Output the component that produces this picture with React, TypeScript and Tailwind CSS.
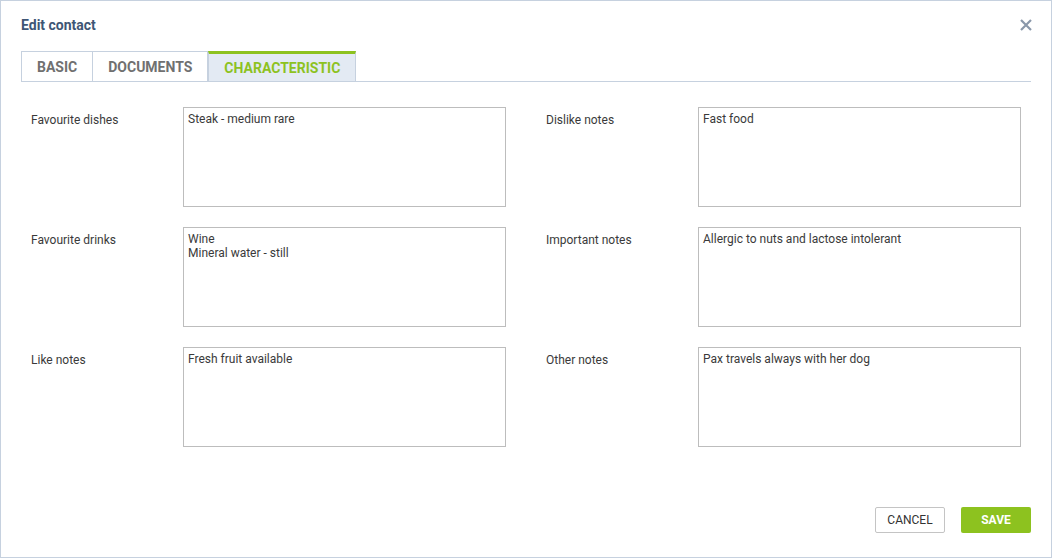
import { useState } from "react"

type Field = { label: string; value: string }

const left: Field[] = [
  { label: "Favourite dishes", value: "Steak - medium rare" },
  { label: "Favourite drinks", value: "Wine\nMineral water - still" },
  { label: "Like notes", value: "Fresh fruit available" },
]

const right: Field[] = [
  { label: "Dislike notes", value: "Fast food" },
  { label: "Important notes", value: "Allergic to nuts and lactose intolerant" },
  { label: "Other notes", value: "Pax travels always with her dog" },
]

const tabs = ["BASIC", "DOCUMENTS", "CHARACTERISTIC"]

function NoteField({ label, value }: Field) {
  return (
    <div className="flex">
      <label className="w-[152px] shrink-0 pt-[6px] text-[12px] leading-[14px] text-[#3a3a3a]">
        {label}
      </label>
      <textarea
        readOnly
        defaultValue={value}
        className="h-[100px] w-[323px] resize-none border border-[#bdbdbd] px-[4px] pt-[4px] text-[12px] leading-[14px] text-[#3a3a3a] outline-none"
        style={{ fontFamily: "inherit" }}
      />
    </div>
  )
}

export default function App() {
  const [active, setActive] = useState("CHARACTERISTIC")

  return (
    <div
      className="flex h-[558px] w-full flex-col border border-[#c6d1df] bg-white px-5"
      style={{ fontFamily: "Roboto, 'Liberation Sans', sans-serif" }}
    >
      {/* Header */}
      <div className="flex items-center justify-between pt-[14px]">
        <h2 className="text-[14px] font-bold leading-5 text-[#3e5675]">Edit contact</h2>
        <button type="button" className="mr-[-1px] text-[#8a98aa]">
          <svg width="12" height="12" viewBox="0 0 12 12">
            <path d="M1 1L11 11M11 1L1 11" stroke="currentColor" strokeWidth="2.2" />
          </svg>
        </button>
      </div>

      {/* Tabs */}
      <div className="mt-4 flex border-b border-[#c6d1df]">
        {tabs.map((tab, i) => {
          const isActive = tab === active
          return (
            <button
              key={tab}
              type="button"
              onClick={() => setActive(tab)}
              className={
                isActive
                  ? "flex h-[30px] items-center border-x border-t-[3px] border-x-[#c6d1df] border-t-[#8dc21f] bg-[#e3eaf3] px-[15px] pt-[1px] text-[14px] font-bold text-[#8dc21f]"
                  : i === 0
                    ? "flex h-[30px] items-center border-x border-t border-[#c6d1df] px-[15px] pt-[1px] text-[14px] font-bold text-[#707070]"
                    : "flex h-[30px] items-center border-r border-t border-[#c6d1df] px-[15px] pt-[1px] text-[14px] font-bold text-[#707070]"
              }
            >
              {tab}
            </button>
          )
        })}
      </div>

      {/* Fields */}
      <div className="mt-[25px] flex gap-[40px] pl-[10px]">
        <div className="flex flex-col gap-5">
          {left.map((f) => (
            <NoteField key={f.label} {...f} />
          ))}
        </div>
        <div className="flex flex-col gap-5">
          {right.map((f) => (
            <NoteField key={f.label} {...f} />
          ))}
        </div>
      </div>

      {/* Actions */}
      <div className="mt-[60px] flex justify-end gap-4">
        <button
          type="button"
          className="h-[26px] w-[70px] rounded-[2px] border border-[#c4c4c4] bg-white text-[12px] text-[#333]"
        >
          CANCEL
        </button>
        <button
          type="button"
          className="h-[26px] w-[70px] rounded-[2px] bg-[#8dc21f] text-[12px] font-bold text-white"
        >
          SAVE
        </button>
      </div>
    </div>
  )
}
